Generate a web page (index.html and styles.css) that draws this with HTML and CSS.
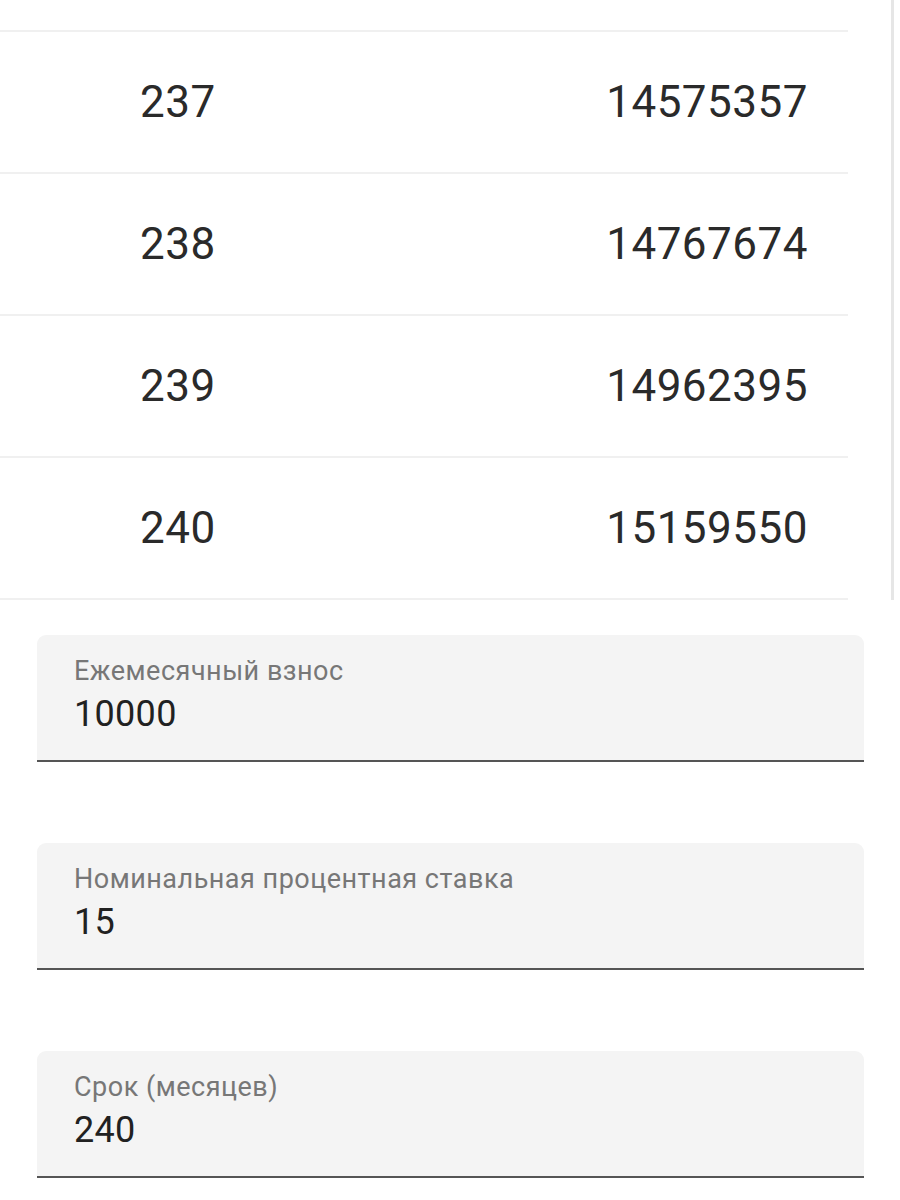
FILE: index.html
```html
<!DOCTYPE html>
<html lang="ru">

<head>
    <meta charset="UTF-8">
    <meta name="viewport" content="width=device-width, initial-scale=1.0">
    <title>Калькулятор накоплений</title>

    <link rel="stylesheet" href="styles.css">
</head>

<body>

    <div class="table-wrap">
        <div class="table">
            <div class="row">
                <div class="cell month">237</div>
                <div class="cell sum">14575357</div>
            </div>
            <div class="row">
                <div class="cell month">238</div>
                <div class="cell sum">14767674</div>
            </div>
            <div class="row">
                <div class="cell month">239</div>
                <div class="cell sum">14962395</div>
            </div>
            <div class="row">
                <div class="cell month">240</div>
                <div class="cell sum">15159550</div>
            </div>
        </div>
    </div>

    <form class="form">
        <div class="field">
            <label class="field-label">Ежемесячный взнос</label>
            <div class="field-value">10000</div>
        </div>
        <div class="field">
            <label class="field-label">Номинальная процентная ставка</label>
            <div class="field-value">15</div>
        </div>
        <div class="field">
            <label class="field-label">Срок (месяцев)</label>
            <div class="field-value">240</div>
        </div>
    </form>

</body>

</html>
```

FILE: styles.css
```css
body {
    font-family: Roboto, 'Noto Sans', sans-serif;
    margin: 0;
    padding: 0;
    background-color: white;
    color: #212121;
}

.table-wrap {
    width: 891px;
    height: 570px;
    padding-top: 30px;
    border-right: 3px solid #e6e6e6;
    overflow: hidden;
}

.table {
    width: 848px;
}

.row {
    display: grid;
    grid-template-columns: 1fr 1fr;
    align-items: center;
    height: 140px;
    border-top: 2px solid #f0f0f0;
}

.row:last-child {
    border-bottom: 2px solid #f0f0f0;
}

.cell {
    font-size: 44px;
    line-height: 1;
    letter-spacing: 0.5px;
    color: #2a2a2a;
}

.month {
    padding-left: 140px;
}

.sum {
    text-align: right;
    padding-right: 40px;
}

.form {
    display: flex;
    flex-direction: column;
    gap: 81px;
    padding: 35px 0 0 37px;
}

.field {
    width: 790px;
    padding: 23px 0 28px 37px;
    background-color: #f4f4f4;
    border-radius: 9px 9px 0 0;
    border-bottom: 2px solid #555;
}

.field-label {
    display: block;
    font-size: 27px;
    line-height: 1;
    letter-spacing: 0.5px;
    color: #777;
    margin-bottom: 11px;
}

.field-value {
    font-size: 36px;
    line-height: 1;
    letter-spacing: 0.3px;
}
```
